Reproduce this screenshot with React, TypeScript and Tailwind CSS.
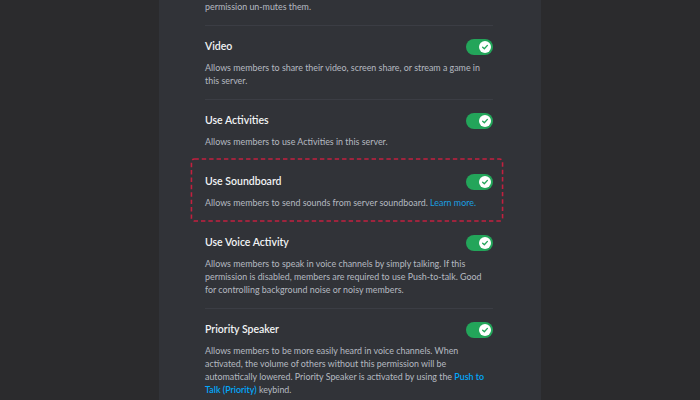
import React from 'react';

type Row = {
  title: string;
  desc: React.ReactNode;
  divider?: boolean;
  highlight?: boolean;
};

function Toggle() {
  return (
    <div className="flex h-[16px] w-[27px] items-center justify-end rounded-full bg-[#23a55a] px-[2px]">
      <div className="flex h-[12px] w-[12px] items-center justify-center rounded-full bg-white">
        <svg width="8" height="8" viewBox="0 0 12 12" fill="none">
          <path d="M2.5 6.3 L5 8.6 L9.6 3.6" stroke="#23a55a" strokeWidth="2" strokeLinecap="round" strokeLinejoin="round" />
        </svg>
      </div>
    </div>
  );
}

const link = 'text-[#00a8fc] font-semibold';

const rows: Row[] = [
  {
    title: 'Video',
    desc: 'Allows members to share their video, screen share, or stream a game in this server.',
    divider: true,
  },
  {
    title: 'Use Activities',
    desc: 'Allows members to use Activities in this server.',
    divider: true,
  },
  {
    title: 'Use Soundboard',
    desc: (
      <>
        Allows members to send sounds from server soundboard.{' '}
        <span className="text-[#1a9fe0]">Learn more.</span>
      </>
    ),
    highlight: true,
  },
  {
    title: 'Use Voice Activity',
    desc: 'Allows members to speak in voice channels by simply talking. If this permission is disabled, members are required to use Push-to-talk. Good for controlling background noise or noisy members.',
  },
  {
    title: 'Priority Speaker',
    desc: (
      <>
        Allows members to be more easily heard in voice channels. When activated, the volume of
        others without this permission will be automatically lowered. Priority Speaker is activated
        by using the <span className={link}>Push to Talk (Priority)</span> keybind.
      </>
    ),
    divider: true,
  },
];

export default function App() {
  return (
    <div
      className="flex h-[400px] w-[700px] justify-center overflow-hidden bg-[#2b2b2d]"
      style={{ fontFamily: 'Lato, "Noto Sans", sans-serif' }}
    >
      <div className="w-[382px] bg-[#313338] pl-[46px] pr-[48px]">
        <p className="pb-[12px] text-[8.9px] leading-[13px] text-[#b5bac1]">permission un-mutes them.</p>

        {rows.map((row) => (
          <div
            key={row.title}
            className={
              'relative border-t pb-[12.5px] pt-[13px] ' +
              (row.divider ? 'border-[#3b3d44]' : 'border-transparent')
            }
          >
            <div className="flex h-[16px] items-center justify-between">
              <span className="text-[10.5px] font-semibold text-[#f2f3f5]">{row.title}</span>
              <Toggle />
            </div>
            <p className="mt-[5.5px] text-[8.9px] leading-[13px] text-[#b5bac1]">{row.desc}</p>

            {row.highlight && (
              <svg
                className="pointer-events-none absolute -bottom-[1px] -left-[17px] -right-[13px] -top-[3px]"
                width="318"
                height="65"
                viewBox="0 0 318 65"
                style={{ width: 'calc(100% + 30px)', height: 'calc(100% + 4px)' }}
              >
                <rect
                  x="1"
                  y="1"
                  width="316"
                  height="63"
                  rx="3"
                  fill="none"
                  stroke="#c2203f"
                  strokeWidth="1.6"
                  strokeDasharray="4.5 3"
                />
              </svg>
            )}
          </div>
        ))}
      </div>
    </div>
  );
}
